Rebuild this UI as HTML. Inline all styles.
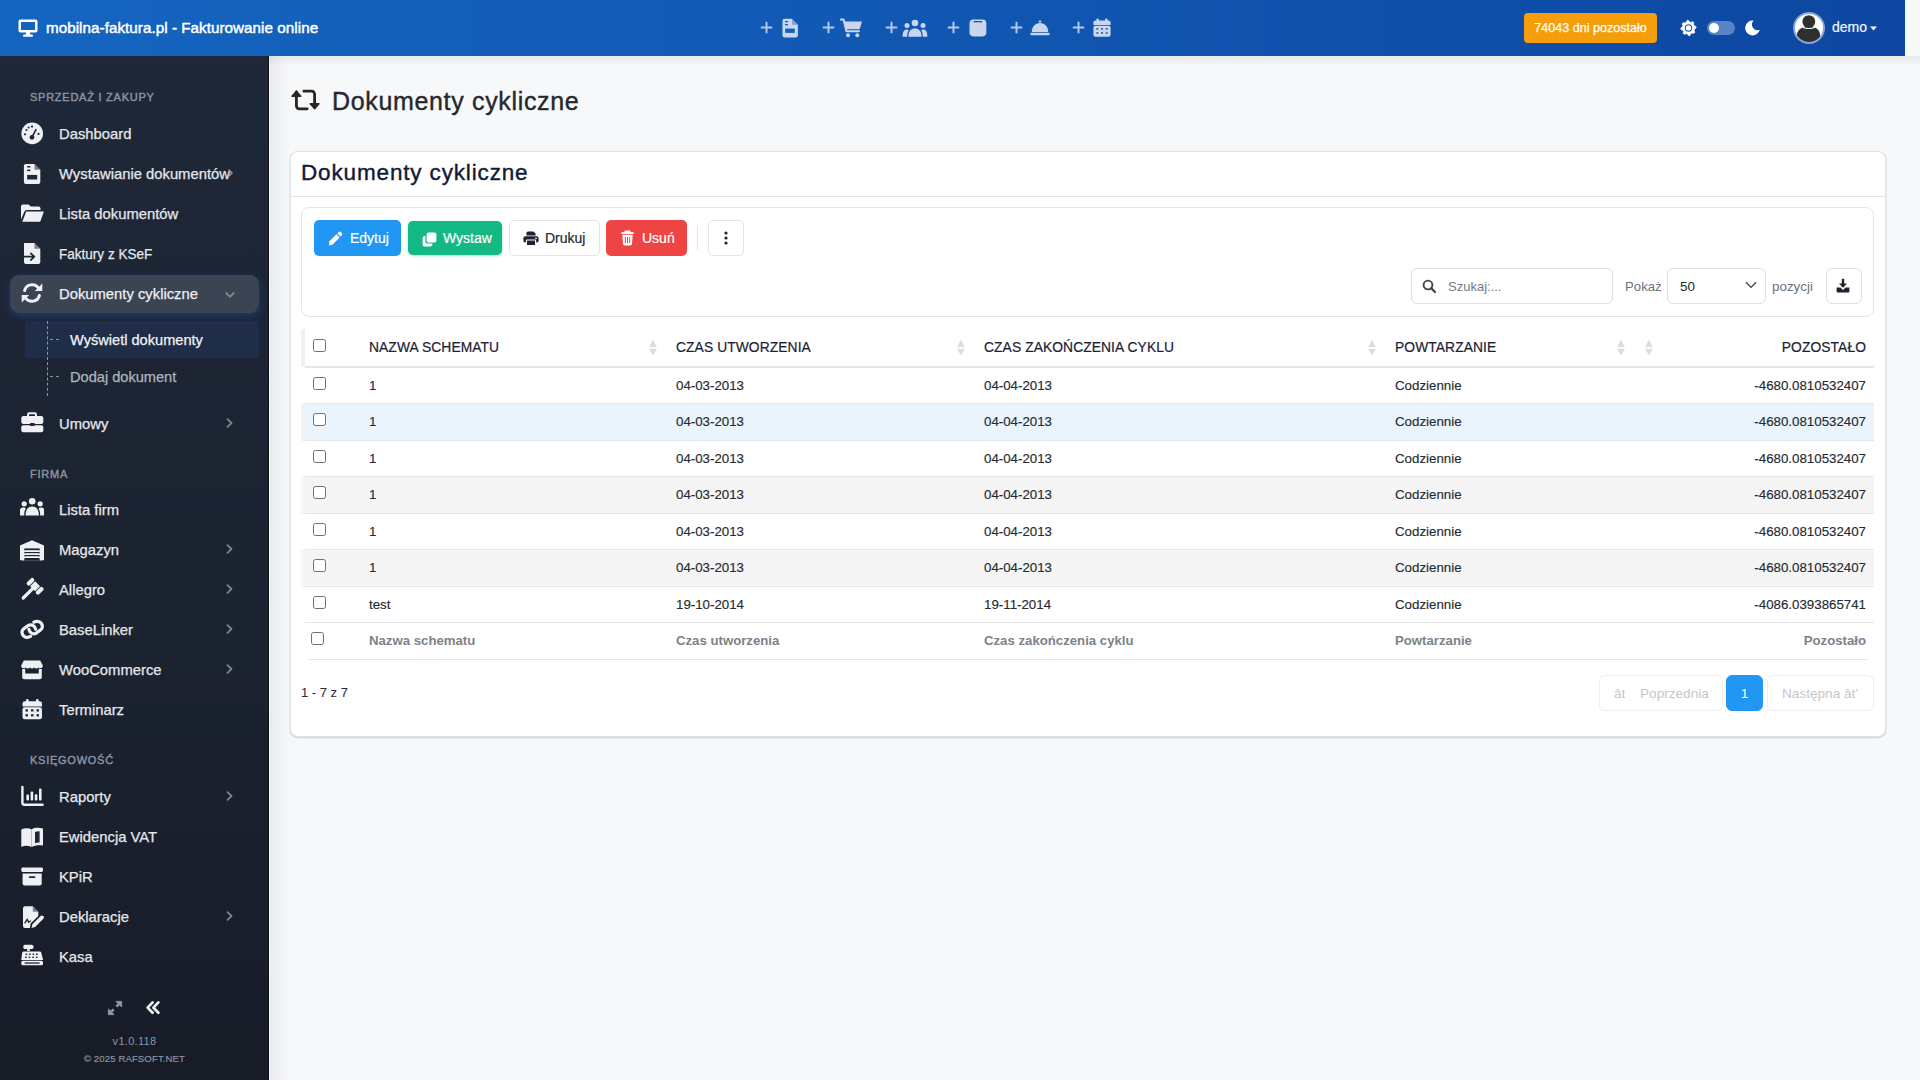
<!DOCTYPE html>
<html lang="pl">
<head>
<meta charset="utf-8">
<title>Dokumenty cykliczne</title>
<style>
*{box-sizing:border-box;margin:0;padding:0}
html,body{width:1920px;height:1080px;overflow:hidden}
body{font-family:"Liberation Sans",sans-serif;background:#f7f8fa;position:relative;color:#212529}
.abs{position:absolute}
svg{display:block}
/* header */
#top{position:absolute;left:0;top:0;width:1905px;height:56px;background:linear-gradient(90deg,#1565c0 0%,#1157b2 50%,#0d47a1 100%);z-index:5}
#top .brand{position:absolute;left:46px;top:18px;font-size:15.2px;line-height:19px;color:#fff;white-space:nowrap;-webkit-text-stroke:0.45px #fff;letter-spacing:0.05px}
.hq{position:absolute;top:17px;height:22px;display:flex;align-items:center;color:#c9d6ee}
.hq .pl{font-size:22px;line-height:22px;margin-right:6px;font-weight:normal}
#badge{position:absolute;left:1524px;top:13px;width:133px;height:30px;border-radius:4px;background:#f59e0b;color:#fff;font-size:12.6px;line-height:30px;text-align:center;white-space:nowrap;-webkit-text-stroke:0.25px #fff}
/* sidebar */
#side{position:absolute;left:0;top:56px;width:269px;height:1024px;background:linear-gradient(180deg,#1f2838 0%,#1b2230 60%,#171c27 100%);border-right:1px solid #0b0f17}
.sec{position:absolute;left:30px;font-size:11px;letter-spacing:0.75px;color:#8e96a3;line-height:14px;white-space:nowrap;margin-top:1.5px;-webkit-text-stroke:0.4px #8e96a3}
.it{position:absolute;left:0;width:269px;height:40px}
.it .ic{position:absolute;left:21px;top:9px;width:23px;height:22px;color:#eef0f3}
.it .tx{position:absolute;left:59px;top:12px;font-size:14.8px;line-height:18px;color:#e6e8eb;white-space:nowrap;-webkit-text-stroke:0.25px #e6e8eb}
.it .ch{position:absolute;left:225px;top:15px;width:9px;height:10px;color:#7d8593}
/* main */
#shadowTop{position:absolute;left:269px;top:56px;width:1651px;height:10px;background:linear-gradient(180deg,rgba(0,0,0,0.06),rgba(0,0,0,0))}
#shadowLeft{position:absolute;left:270px;top:56px;width:22px;height:1024px;background:linear-gradient(90deg,rgba(0,0,0,0.055),rgba(0,0,0,0.02) 50%,rgba(0,0,0,0))}

/* content */
#ptitle{position:absolute;left:332px;top:87px;font-size:25px;line-height:28px;letter-spacing:0.66px;color:#25292d;white-space:nowrap;-webkit-text-stroke:0.4px #25292d}
#card{position:absolute;left:290px;top:151px;width:1596px;height:586px;background:#fff;border:1px solid #dfe2e6;border-radius:8px;box-shadow:0 1px 2px rgba(0,0,0,0.18)}
#ctitle{position:absolute;left:301px;top:159px;font-size:22.5px;line-height:28px;letter-spacing:0.85px;color:#111a35;white-space:nowrap;-webkit-text-stroke:0.4px #111a35}
.hdrline{position:absolute;left:291px;top:196px;width:1594px;height:1px;background:#e3e5e9}
#tool{position:absolute;left:301px;top:207px;width:1573px;height:110px;border:1px solid #e3e5e9;border-radius:8px;background:#fff}
.btn{position:absolute;top:220px;height:36px;border-radius:5px;color:#fff;font-size:14px;line-height:36px;white-space:nowrap}
.btn svg{position:absolute;top:11px}
.btn span{position:absolute;top:0;-webkit-text-stroke:0.2px currentColor}
.inp{position:absolute;top:268px;height:36px;border:1px solid #dcdfe4;border-radius:6px;background:#fff}
.lbl{position:absolute;top:278px;font-size:13.4px;line-height:18px;color:#6b7280;white-space:nowrap}
/* table */
.th{position:absolute;top:339px;font-size:13.8px;line-height:18px;letter-spacing:0.1px;color:#1b2236;white-space:nowrap;-webkit-text-stroke:0.2px currentColor}
.td{position:absolute;font-size:13.3px;line-height:18px;color:#262b33;white-space:nowrap;-webkit-text-stroke:0.15px currentColor}
.tf{position:absolute;top:632px;font-size:13.2px;line-height:18px;font-weight:bold;color:#7d828a;white-space:nowrap}
.rowline{position:absolute;left:305px;width:1569px;height:1px;background:#e4e6ea}
.cb{position:absolute;left:313px;width:13px;height:13px;border:1px solid #6f6f6f;border-radius:2.5px;background:#fff}
.sort{position:absolute;top:339px;width:8px;height:17px}
.pg{position:absolute;top:675px;height:36px;border:1px solid #eceef1;border-radius:6px;font-size:13.6px;line-height:36px;color:#c3c7cd;white-space:nowrap;background:#fff}
</style>
</head>
<body>

<!-- HEADER -->
<div id="top">
  <svg class="abs" style="left:18px;top:19px" width="20" height="18" viewBox="0 0 20 18"><rect x="0.5" y="0.5" width="19" height="13" rx="2" fill="#fff"/><rect x="3" y="3" width="14" height="8" fill="#1462bd"/><rect x="8" y="13" width="4" height="3" fill="#fff"/><rect x="5" y="15.5" width="10" height="2.3" rx="1.1" fill="#fff"/></svg>
  <div class="brand">mobilna-faktura.pl - Fakturowanie online</div>
<svg class="abs" style="left:760px;top:21px" width="13" height="13" viewBox="0 0 13 13"><path d="M6.5 0.8 V12.2 M0.8 6.5 H12.2" stroke="#b4c6e6" stroke-width="2"/></svg><svg class="abs" style="left:782px;top:18px" width="17" height="20" viewBox="0 0 17 20"><path d="M2.5 0.8 H10 L15.9 6.7 V17.5 a2 2 0 0 1 -2 2 H2.5 a2 2 0 0 1 -2 -2 V2.8 a2 2 0 0 1 2 -2z" fill="#c9d6ee"/><path d="M10 0.8 V6.7 H15.9z" fill="#1157b2" opacity="0.4"/><rect x="3" y="3" width="3" height="1.3" fill="#1160b8"/><rect x="3" y="6" width="3" height="1.3" fill="#1160b8"/><rect x="3.2" y="10.6" width="9.6" height="4.3" fill="#1160b8"/></svg><svg class="abs" style="left:822px;top:21px" width="13" height="13" viewBox="0 0 13 13"><path d="M6.5 0.8 V12.2 M0.8 6.5 H12.2" stroke="#b4c6e6" stroke-width="2"/></svg><svg class="abs" style="left:840px;top:18px" width="23" height="20" viewBox="0 0 23 20"><path d="M0.8 1.6 H3.6 L6.4 13.2 H19" stroke="#c9d6ee" stroke-width="2" fill="none" stroke-linecap="round" stroke-linejoin="round"/><path d="M4.5 3.6 H22 L19.6 11.2 H6.3z" fill="#c9d6ee"/><circle cx="8" cy="17.3" r="2" fill="#c9d6ee"/><circle cx="17.3" cy="17.3" r="2" fill="#c9d6ee"/></svg><svg class="abs" style="left:885px;top:21px" width="13" height="13" viewBox="0 0 13 13"><path d="M6.5 0.8 V12.2 M0.8 6.5 H12.2" stroke="#b4c6e6" stroke-width="2"/></svg><svg class="abs" style="left:902px;top:19px" width="26" height="19" viewBox="0 0 26 19"><circle cx="13" cy="4" r="3.3" fill="#c9d6ee"/><circle cx="5" cy="6.5" r="2.5" fill="#c9d6ee"/><circle cx="21" cy="6.5" r="2.5" fill="#c9d6ee"/><path d="M6.4 17.8 C6.4 11.8 9.3 9.4 13 9.4 C16.7 9.4 19.6 11.8 19.6 17.8z" fill="#c9d6ee"/><path d="M0.6 17.8 C0.6 12.6 2.2 10.5 4.6 10.5 C5.6 10.5 6.3 10.8 6.8 11.3 C5.6 12.9 5.2 15.2 5.2 17.8z" fill="#c9d6ee"/><path d="M25.4 17.8 C25.4 12.6 23.8 10.5 21.4 10.5 C20.4 10.5 19.7 10.8 19.2 11.3 C20.4 12.9 20.8 15.2 20.8 17.8z" fill="#c9d6ee"/></svg><svg class="abs" style="left:947px;top:21px" width="13" height="13" viewBox="0 0 13 13"><path d="M6.5 0.8 V12.2 M0.8 6.5 H12.2" stroke="#b4c6e6" stroke-width="2"/></svg><svg class="abs" style="left:969px;top:19px" width="18" height="18" viewBox="0 0 18 18"><rect x="0.5" y="0.6" width="16.8" height="16.8" rx="3.8" fill="#c9d6ee"/><path d="M5.4 3.6 V2.6 H12.4 V3.6" stroke="#1157b2" stroke-width="1.3" fill="none"/></svg><svg class="abs" style="left:1010px;top:21px" width="13" height="13" viewBox="0 0 13 13"><path d="M6.5 0.8 V12.2 M0.8 6.5 H12.2" stroke="#b4c6e6" stroke-width="2"/></svg><svg class="abs" style="left:1030px;top:20px" width="20" height="16" viewBox="0 0 20 16"><rect x="8.6" y="0.4" width="2.8" height="2.2" rx="1" fill="#c9d6ee"/><path d="M1.8 12 C1.8 6.6 5.4 3 10 3 C14.6 3 18.2 6.6 18.2 12z" fill="#c9d6ee"/><rect x="0.3" y="12.8" width="19.4" height="2.4" rx="1.2" fill="#c9d6ee"/></svg><svg class="abs" style="left:1072px;top:21px" width="13" height="13" viewBox="0 0 13 13"><path d="M6.5 0.8 V12.2 M0.8 6.5 H12.2" stroke="#b4c6e6" stroke-width="2"/></svg><svg class="abs" style="left:1093px;top:18px" width="18" height="20" viewBox="0 0 18 20"><rect x="3.5" y="0.4" width="2.4" height="3.6" rx="1.1" fill="#c9d6ee"/><rect x="12.1" y="0.4" width="2.4" height="3.6" rx="1.1" fill="#c9d6ee"/><path d="M0.4 4.6 a2 2 0 0 1 2 -2 H15.6 a2 2 0 0 1 2 2 V7 H0.4z" fill="#c9d6ee"/><rect x="0.4" y="7.8" width="17.2" height="11" rx="2" fill="#c9d6ee"/><g fill="#1157b2"><rect x="3.4" y="10" width="1.8" height="1.6"/><rect x="8.1" y="10" width="1.8" height="1.6"/><rect x="12.8" y="10" width="1.8" height="1.6"/><rect x="3.4" y="14.2" width="1.8" height="1.6"/><rect x="8.1" y="14.2" width="1.8" height="1.6"/><rect x="12.8" y="14.2" width="1.8" height="1.6"/></g></svg><div id="badge">74043 dni pozostało</div><svg class="abs" style="left:1680px;top:20px" width="17" height="16" viewBox="0 0 17 16"><path d="M15.95 6.52 L16.10 8.00 L14.38 9.17 L14.04 10.30 L14.82 12.22 L13.87 13.37 L11.83 12.99 L10.80 13.54 L9.98 15.45 L8.50 15.60 L7.33 13.88 L6.20 13.54 L4.28 14.32 L3.13 13.37 L3.51 11.33 L2.96 10.30 L1.05 9.48 L0.90 8.00 L2.62 6.83 L2.96 5.70 L2.18 3.78 L3.13 2.63 L5.17 3.01 L6.20 2.46 L7.02 0.55 L8.50 0.40 L9.67 2.12 L10.80 2.46 L12.72 1.68 L13.87 2.63 L13.49 4.67 L14.04 5.70 L15.95 6.52 z" fill="#fff" stroke="#fff" stroke-width="0.8" stroke-linejoin="round"/><circle cx="8.5" cy="8" r="3.7" fill="#0f4faa"/><circle cx="8.5" cy="8" r="2.7" fill="#fff"/></svg><div class="abs" style="left:1707px;top:21px;width:28px;height:14px;border-radius:7px;background:#5a84c8"></div><div class="abs" style="left:1709px;top:23px;width:10px;height:10px;border-radius:50%;background:#fff"></div><svg class="abs" style="left:1745px;top:20px" width="16" height="16" viewBox="0 0 16 16"><path d="M8.61 0.67 A7.4 7.4 0 1 0 14.79 9.75 A5.6 5.6 0 0 1 8.61 0.67z" fill="#fff"/></svg><div class="abs" style="left:1793px;top:12px;width:32px;height:32px;border-radius:50%;background:#fff;border:2px solid #8aa6d8;overflow:hidden"><svg width="28" height="28" viewBox="0 0 28 28" style="display:block"><circle cx="13.8" cy="7.6" r="6.4" fill="#2f2f2f"/><path d="M1.8 28 V22 C1.8 16.5 6 13.2 10.5 13.2 H17 C21.6 13.2 25.2 16.5 25.2 22 V28z" fill="#2f2f2f"/><path d="M8 13.6 C10 14.8 17.6 14.8 19.6 13.6" stroke="#fff" stroke-width="1" fill="none"/></svg></div><div class="abs" style="left:1832px;top:18px;font-size:14px;line-height:18px;color:#f3f6fb;white-space:nowrap;-webkit-text-stroke:0.2px #f3f6fb">demo</div><svg class="abs" style="left:1870px;top:26px" width="7" height="5" viewBox="0 0 7 5"><path d="M0 0.5 H7 L3.5 4.5z" fill="#f3f6fb"/></svg>
</div>

<!-- SIDEBAR -->
<div id="side">
<div class="sec" style="top:32px">SPRZEDAŻ I ZAKUPY</div>
<div class="it" style="top:57px"><svg class="ic" style="left:20px;top:8px;width:24px;height:24px" viewBox="0 0 24 24"><circle cx="12.2" cy="12.4" r="10.8" fill="#eef0f3"/><circle cx="6.5" cy="9" r="1.1" fill="#1e2736"/><circle cx="12" cy="5.6" r="1.1" fill="#1e2736"/><circle cx="5" cy="13.3" r="1.1" fill="#1e2736"/><circle cx="18.5" cy="12.9" r="1.1" fill="#1e2736"/><circle cx="8.6" cy="6.6" r="1" fill="#1e2736"/><path d="M12 16.2 L16 8.6" stroke="#1e2736" stroke-width="1.6" stroke-linecap="round"/><circle cx="12" cy="16.3" r="2.4" fill="#1e2736"/></svg><div class="tx">Dashboard</div></div>
<div class="it" style="top:97px"><svg class="ic" style="left:20px;top:8px;width:24px;height:24px" viewBox="0 0 24 24"><path d="M5.9 2.9 H14.5 L20.3 8.7 V20.9 a2 2 0 0 1 -2 2 H5.9 a2 2 0 0 1 -2 -2 V4.9 a2 2 0 0 1 2 -2z" fill="#eef0f3"/><path d="M14.5 2.9 V8.7 H20.3z" fill="#1e2736" opacity="0.55"/><rect x="7.2" y="5" width="3.2" height="1.5" fill="#1e2736"/><rect x="7.2" y="8.6" width="3.2" height="1.5" fill="#1e2736"/><rect x="7.2" y="13.9" width="10" height="4.6" fill="#1e2736"/></svg><div class="tx">Wystawianie dokumentów</div><svg class="ch" style="left:227px;top:16px;width:7px;height:8px;color:#9aa1ac" viewBox="0 0 9 10"><path d="M2.5 1.2 L6.5 5 L2.5 8.8" stroke="currentColor" stroke-width="1.8" fill="none" stroke-linecap="round" stroke-linejoin="round"/></svg></div>
<div class="it" style="top:137px"><svg class="ic" style="left:20px;top:8px;width:24px;height:24px" viewBox="0 0 24 24"><path d="M1 5.6 a2 2 0 0 1 2 -2 H8.6 L10.8 5.6 H18.5 a2 2 0 0 1 2 2 V9 H7 a3 3 0 0 0 -2.8 1.9 L1 18.5z" fill="#eef0f3"/><path d="M6.2 10.4 H23.9 L20.2 20.7 H2.3z" fill="#eef0f3"/></svg><div class="tx">Lista dokumentów</div></div>
<div class="it" style="top:177px"><svg class="ic" style="left:20px;top:8px;width:24px;height:24px" viewBox="0 0 24 24"><path d="M6 2 H14.5 L20.3 7.8 V20.9 a2 2 0 0 1 -2 2 H6 a2 2 0 0 1 -2 -2 V2z" fill="#eef0f3"/><path d="M14.5 2 V7.8 H20.3z" fill="#1e2736" opacity="0.55"/><path d="M2.6 15.7 H14.2 M10.8 12.3 L14.3 15.7 L10.8 19.1" stroke="#1e2736" stroke-width="1.7" fill="none" stroke-linecap="round" stroke-linejoin="round"/></svg><div class="tx" style="transform:scaleX(0.915);transform-origin:0 50%">Faktury z KSeF</div></div>
<div class="abs" style="left:10px;top:219px;width:249px;height:38px;border-radius:9px;background:#3b4452;box-shadow:0 3px 8px rgba(37,99,235,0.33)"></div>
<div class="it" style="top:217px"><svg class="ic" style="left:20px;top:8px;width:24px;height:24px" viewBox="0 0 24 24"><g fill="none" stroke="#eef0f3" stroke-width="3" stroke-linecap="round"><path d="M4.6 9.5 A7.8 7.8 0 0 1 18.2 6.6"/><path d="M19.4 14.5 A7.8 7.8 0 0 1 5.8 17.4"/></g><path d="M22.3 2.5 V10 H14.8z" fill="#eef0f3"/><path d="M1.7 21.5 V14 H9.2z" fill="#eef0f3"/></svg><div class="tx" style="color:#f1f3f5">Dokumenty cykliczne</div></div>
<svg class="abs" style="left:225px;top:234.5px" width="10" height="8" viewBox="0 0 10 8"><path d="M1.2 2 L5 5.8 L8.8 2" stroke="#7d8593" stroke-width="1.8" fill="none" stroke-linecap="round" stroke-linejoin="round"/></svg>
<div class="abs" style="left:25px;top:265px;width:234px;height:37px;background:#1f2d49"></div>
<div class="abs" style="left:47px;top:265px;width:0;height:75px;border-left:1px dashed #8d95a3"></div>
<div class="abs" style="left:50px;top:283px;width:9px;height:0;border-top:1px dashed #8d95a3"></div>
<div class="abs" style="left:50px;top:320px;width:9px;height:0;border-top:1px dashed #8d95a3"></div>
<div class="abs" style="left:70px;top:275px;font-size:14.6px;line-height:18px;color:#f1f3f5;white-space:nowrap;-webkit-text-stroke:0.25px #f1f3f5">Wyświetl dokumenty</div>
<div class="abs" style="left:70px;top:312px;font-size:14.6px;line-height:18px;color:#aeb4bd;white-space:nowrap;-webkit-text-stroke:0.25px #aeb4bd">Dodaj dokument</div>
<div class="it" style="top:347px"><svg class="ic" style="left:20px;top:8px;width:24px;height:24px" viewBox="0 0 24 24"><path d="M8 5 V3.5 a1.3 1.3 0 0 1 1.3 -1.3 h5.4 a1.3 1.3 0 0 1 1.3 1.3 V5" stroke="#eef0f3" stroke-width="2" fill="none"/><rect x="1.3" y="5" width="22" height="8" rx="2" fill="#eef0f3"/><rect x="1.3" y="14.3" width="22" height="7" rx="2" fill="#eef0f3"/><rect x="10" y="12" width="4.6" height="3" rx="0.6" fill="#1e2736"/></svg><div class="tx">Umowy</div><svg class="ch" viewBox="0 0 9 10"><path d="M2.5 1.2 L6.5 5 L2.5 8.8" stroke="currentColor" stroke-width="1.8" fill="none" stroke-linecap="round" stroke-linejoin="round"/></svg></div>
<div class="sec" style="top:409px">FIRMA</div>
<div class="it" style="top:433px"><svg class="ic" style="left:20px;top:8px;width:24px;height:24px" viewBox="0 0 24 24"><circle cx="12.2" cy="4.2" r="3.3" fill="#eef0f3"/><circle cx="4.2" cy="6.8" r="2.6" fill="#eef0f3"/><circle cx="20.2" cy="6.8" r="2.6" fill="#eef0f3"/><path d="M5.5 18.4 C5.5 12 8.5 9.4 12.2 9.4 C15.9 9.4 18.9 12 18.9 18.4z" fill="#eef0f3"/><path d="M-1.4 18.4 C-1.4 12.8 0.5 10.6 3.3 10.6 C4.4 10.6 5.3 11 5.8 11.5 C4.6 13.2 4.2 15.6 4.2 18.4z" fill="#eef0f3"/><path d="M25.8 18.4 C25.8 12.8 23.9 10.6 21.1 10.6 C20 10.6 19.1 11 18.6 11.5 C19.8 13.2 20.2 15.6 20.2 18.4z" fill="#eef0f3"/></svg><div class="tx">Lista firm</div></div>
<div class="it" style="top:473px"><svg class="ic" style="left:20px;top:8px;width:24px;height:24px" viewBox="0 0 24 24"><path d="M0 8.5 L12 3.2 L24 8.5 V23.3 H0z" fill="#eef0f3"/><rect x="4.2" y="11.4" width="15.6" height="2" fill="#1e2736"/><rect x="4.2" y="15" width="15.6" height="1.4" fill="#1e2736"/><rect x="4.2" y="18" width="15.6" height="1.4" fill="#1e2736"/><rect x="4.2" y="21" width="15.6" height="2.3" fill="#1e2736"/><rect x="2.2" y="11.4" width="2" height="12" fill="#eef0f3"/><rect x="19.8" y="11.4" width="2" height="12" fill="#eef0f3"/><rect x="5.4" y="13.4" width="13.2" height="1.6" fill="#eef0f3"/><rect x="5.4" y="16.4" width="13.2" height="1.6" fill="#eef0f3"/><rect x="5.4" y="19.4" width="13.2" height="1.6" fill="#eef0f3"/></svg><div class="tx">Magazyn</div><svg class="ch" viewBox="0 0 9 10"><path d="M2.5 1.2 L6.5 5 L2.5 8.8" stroke="currentColor" stroke-width="1.8" fill="none" stroke-linecap="round" stroke-linejoin="round"/></svg></div>
<div class="it" style="top:513px"><svg class="ic" style="left:20px;top:8px;width:24px;height:24px" viewBox="0 0 24 24"><path d="M3.2 21 L12.4 11.8" stroke="#eef0f3" stroke-width="3.2" stroke-linecap="round"/><rect x="11.6" y="5.8" width="7" height="7" transform="rotate(45 15.1 9.3)" fill="#eef0f3"/><rect x="6" y="2.6" width="9" height="4.2" rx="2" transform="rotate(-45 10.5 4.7)" fill="#eef0f3"/><rect x="15.2" y="11.7" width="9" height="4.2" rx="2" transform="rotate(-45 19.7 13.8)" fill="#eef0f3"/></svg><div class="tx">Allegro</div><svg class="ch" viewBox="0 0 9 10"><path d="M2.5 1.2 L6.5 5 L2.5 8.8" stroke="currentColor" stroke-width="1.8" fill="none" stroke-linecap="round" stroke-linejoin="round"/></svg></div>
<div class="it" style="top:553px"><svg class="ic" style="left:20px;top:8px;width:24px;height:24px" viewBox="0 0 24 24"><g fill="none" stroke="#eef0f3" stroke-width="3.2" stroke-linecap="round" stroke-linejoin="round"><path d="M15.6 12.2 C14.8 8.4 10.9 6.6 7.9 8.7 L3.6 11.9 C0.9 14 1.9 18.7 5.1 19.9 C7 20.6 8.9 20.3 10.5 19.4"/><path d="M8.9 12.4 C9.7 16.2 13.5 18 16.5 15.9 L20.8 12.7 C23.5 10.6 22.5 5.9 19.3 4.7 C17.4 4 15.5 4.3 13.9 5.2"/></g></svg><div class="tx">BaseLinker</div><svg class="ch" viewBox="0 0 9 10"><path d="M2.5 1.2 L6.5 5 L2.5 8.8" stroke="currentColor" stroke-width="1.8" fill="none" stroke-linecap="round" stroke-linejoin="round"/></svg></div>
<div class="it" style="top:593px"><svg class="ic" style="left:20px;top:8px;width:24px;height:24px" viewBox="0 0 24 24"><path d="M3.8 3.4 H20.2 L22.9 8.8 a2.6 2.6 0 0 1 -4.5 1.6 a2.6 2.6 0 0 1 -4.2 0 a2.6 2.6 0 0 1 -4.3 0 a2.6 2.6 0 0 1 -4.2 0 a2.6 2.6 0 0 1 -4.6 -1.6z" fill="#eef0f3"/><path d="M2.2 12 V20.3 a2 2 0 0 0 2 2 H19.8 a2 2 0 0 0 2 -2 V12 H18.8 V16.4 H5.2 V12z" fill="#eef0f3"/></svg><div class="tx">WooCommerce</div><svg class="ch" viewBox="0 0 9 10"><path d="M2.5 1.2 L6.5 5 L2.5 8.8" stroke="currentColor" stroke-width="1.8" fill="none" stroke-linecap="round" stroke-linejoin="round"/></svg></div>
<div class="it" style="top:633px"><svg class="ic" style="left:20px;top:8px;width:24px;height:24px" viewBox="0 0 24 24"><rect x="6" y="2" width="2.6" height="4" rx="1.2" fill="#eef0f3"/><rect x="16" y="2" width="2.6" height="4" rx="1.2" fill="#eef0f3"/><path d="M2.5 6.5 a2.3 2.3 0 0 1 2.3 -2.3 H19.7 a2.3 2.3 0 0 1 2.3 2.3 V9.5 H2.5z" fill="#eef0f3"/><rect x="2.5" y="10.3" width="19.5" height="11.9" rx="2.2" fill="#eef0f3"/><g fill="#1e2736"><rect x="5.5" y="12.3" width="2.5" height="2.2"/><rect x="11" y="12.3" width="2.5" height="2.2"/><rect x="16.5" y="12.3" width="2.5" height="2.2"/><rect x="5.5" y="17.2" width="2.5" height="2.2"/><rect x="11" y="17.2" width="2.5" height="2.2"/><rect x="16.5" y="17.2" width="2.5" height="2.2"/></g></svg><div class="tx">Terminarz</div></div>
<div class="sec" style="top:695px">KSIĘGOWOŚĆ</div>
<div class="it" style="top:720px"><svg class="ic" style="left:20px;top:8px;width:24px;height:24px" viewBox="0 0 24 24"><path d="M2.4 3 V18.8 a2 2 0 0 0 2 2 H22.6" stroke="#eef0f3" stroke-width="2.4" fill="none" stroke-linecap="round"/><rect x="6.4" y="10.5" width="2.6" height="6" rx="1" fill="#eef0f3"/><rect x="10.6" y="7.4" width="2.6" height="9.1" rx="1" fill="#eef0f3"/><rect x="14.8" y="10.2" width="2.6" height="6.3" rx="1" fill="#eef0f3"/><rect x="19" y="4.6" width="2.6" height="11.9" rx="1" fill="#eef0f3"/></svg><div class="tx">Raporty</div><svg class="ch" viewBox="0 0 9 10"><path d="M2.5 1.2 L6.5 5 L2.5 8.8" stroke="currentColor" stroke-width="1.8" fill="none" stroke-linecap="round" stroke-linejoin="round"/></svg></div>
<div class="it" style="top:760px"><svg class="ic" style="left:20px;top:8px;width:24px;height:24px" viewBox="0 0 24 24"><path d="M1.3 5.6 C4.5 3.8 8.2 3.8 11.6 5.2 V23 C8.2 21.3 4.5 21.3 1.3 22.9z" fill="#eef0f3"/><path d="M11.6 5.2 C14.8 3.6 19.2 3.4 23 4.6 V21.6 C19.2 20.8 15 21.2 11.6 23z" fill="#eef0f3"/><path d="M15 8 C16.8 7.3 18.3 7.1 19.6 7.3 V18.5 C18.2 18.3 16.6 18.6 15 19.2z" fill="#1e2736"/></svg><div class="tx">Ewidencja VAT</div></div>
<div class="it" style="top:800px"><svg class="ic" style="left:20px;top:8px;width:24px;height:24px" viewBox="0 0 24 24"><rect x="1.3" y="3.6" width="21.7" height="4.4" rx="1.4" fill="#eef0f3"/><path d="M2.6 9.6 H21.7 V19.5 a2 2 0 0 1 -2 2 H4.6 a2 2 0 0 1 -2 -2z" fill="#eef0f3"/><rect x="8.8" y="12.2" width="6.6" height="1.8" rx="0.9" fill="#1e2736"/></svg><div class="tx">KPiR</div></div>
<div class="it" style="top:840px"><svg class="ic" style="left:20px;top:8px;width:24px;height:24px" viewBox="0 0 24 24"><path d="M5 2.3 H12.8 L18.3 7.8 V12 L10.6 19.6 L10 24 H5 a2 2 0 0 1 -2 -2 V4.3 a2 2 0 0 1 2 -2z" fill="#eef0f3"/><path d="M12.8 2.3 V7.8 H18.3z" fill="#1e2736" opacity="0.55"/><path d="M4.6 19.3 L7.2 15.4 L8.6 18.2 L10.8 16.8" stroke="#1e2736" stroke-width="1.3" fill="none"/><path d="M12.4 20.3 L20.6 12.1 a1.9 1.9 0 0 1 2.7 2.7 L15.1 23 L11.5 23.9z" fill="#eef0f3"/></svg><div class="tx">Deklaracje</div><svg class="ch" viewBox="0 0 9 10"><path d="M2.5 1.2 L6.5 5 L2.5 8.8" stroke="currentColor" stroke-width="1.8" fill="none" stroke-linecap="round" stroke-linejoin="round"/></svg></div>
<div class="it" style="top:880px"><svg class="ic" style="left:20px;top:8px;width:24px;height:24px" viewBox="0 0 24 24"><rect x="3.4" y="0.7" width="10" height="4.4" rx="1.5" fill="#eef0f3"/><rect x="7.2" y="5" width="2.6" height="2" fill="#eef0f3"/><path d="M3.6 7.4 H19.8 a1.5 1.5 0 0 1 1.4 1 L23 15.5 V16 H1.3 V15.5 L2.2 8.4 a1.5 1.5 0 0 1 1.4 -1z" fill="#eef0f3"/><rect x="1.3" y="16.8" width="21.7" height="4.4" rx="1.5" fill="#eef0f3"/><g fill="#1e2736"><rect x="5.5" y="9.6" width="1.8" height="1.3"/><rect x="9" y="9.6" width="1.8" height="1.3"/><rect x="12.5" y="9.6" width="1.8" height="1.3"/><rect x="16" y="9.6" width="1.8" height="1.3"/><rect x="5" y="12.6" width="1.8" height="1.3"/><rect x="8.6" y="12.6" width="1.8" height="1.3"/><rect x="12.2" y="12.6" width="1.8" height="1.3"/><rect x="15.8" y="12.6" width="1.8" height="1.3"/><rect x="4.6" y="18.4" width="15" height="1.3"/></g></svg><div class="tx">Kasa</div></div>
<svg class="abs" style="left:107px;top:944px" width="16" height="16" viewBox="0 0 16 16"><path d="M9 1.4 H14.6 V7z M7 14.6 H1.4 V9z" fill="#8a96a8" stroke="#8a96a8" stroke-width="1" stroke-linejoin="round"/><path d="M13 3 L9.4 6.6 M3 13 L6.6 9.4" stroke="#8a96a8" stroke-width="2.6"/></svg>
<svg class="abs" style="left:145px;top:944px" width="16" height="16" viewBox="0 0 16 16"><path d="M7.6 2.4 L2.6 7.6 L7.6 12.8 M13.4 2.4 L8.4 7.6 L13.4 12.8" stroke="#f3f4f6" stroke-width="2.7" fill="none" stroke-linecap="round" stroke-linejoin="round"/></svg>
<div class="abs" style="left:0;top:978px;width:269px;text-align:center;font-size:11px;line-height:14px;color:#8d97a5;letter-spacing:0.3px">v1.0.118</div>
<div class="abs" style="left:0;top:997px;width:269px;text-align:center;font-size:9.6px;line-height:12px;color:#8d97a5;letter-spacing:0.1px;-webkit-text-stroke:0.15px #8d97a5">© 2025 RAFSOFT.NET</div>
</div>

<!-- MAIN -->
<div id="shadowTop"></div>
<div id="shadowLeft"></div>
<svg class="abs" style="left:291px;top:88px" width="29" height="24" viewBox="0 0 29 24"><path d="M5.4 4 V17.8 a3 3 0 0 0 3 3 H16.2" stroke="#262626" stroke-width="2.8" fill="none" stroke-linecap="round"/><path d="M1 8.2 L5.4 3.2 L9.8 8.2z" fill="#262626" stroke="#262626" stroke-width="1.4" stroke-linejoin="round"/><path d="M12.8 3.2 H20.6 a3 3 0 0 1 3 3 V19" stroke="#262626" stroke-width="2.8" fill="none" stroke-linecap="round"/><path d="M19.2 15.8 L23.6 20.8 L28 15.8z" fill="#262626" stroke="#262626" stroke-width="1.4" stroke-linejoin="round"/></svg><div id="ptitle">Dokumenty cykliczne</div><div id="card"></div><div id="ctitle">Dokumenty cykliczne</div><div class="hdrline"></div><div id="tool"></div><div class="btn" style="left:314px;width:87px;background:#2196f3"><svg style="left:14px;top:11px" width="15" height="15" viewBox="0 0 15 15"><path d="M10.6 1.2 a1.6 1.6 0 0 1 2.3 0 L13.8 2.1 a1.6 1.6 0 0 1 0 2.3 L12.6 5.6 L9.4 2.4z" fill="#fff"/><path d="M8.5 3.3 L11.7 6.5 L4.6 13.6 L0.8 14.4 L1.5 10.3z" fill="#fff"/></svg><span style="left:36px">Edytuj</span></div><div class="btn" style="left:408px;top:221px;height:34px;line-height:34px;width:94px;background:#14b884;box-shadow:0 1px 3px rgba(20,184,132,0.4)"><svg style="left:14px;top:11px" width="15" height="15" viewBox="0 0 15 15"><rect x="4.6" y="0.6" width="9.8" height="10" rx="2" fill="#fff"/><path d="M3.4 4 H2.6 a2 2 0 0 0 -2 2 V12.4 a2 2 0 0 0 2 2 H8.4 a2 2 0 0 0 2 -2 V11.6 H5.6 a2.2 2.2 0 0 1 -2.2 -2.2z" fill="#fff"/></svg><span style="left:35px">Wystaw</span></div><div class="btn" style="left:509px;width:91px;background:#fff;border:1px solid #e1e4e8;color:#232a36;line-height:34px"><svg style="left:13px;top:10px" width="16" height="15" viewBox="0 0 16 15"><path d="M3.4 4.4 V2.2 a1.6 1.6 0 0 1 1.6 -1.6 H10.4 L12.6 2.6 V4.4z" fill="#1d2330"/><rect x="0.4" y="5.2" width="15.2" height="6.2" rx="2" fill="#1d2330"/><rect x="3.4" y="9" width="9.2" height="5.6" rx="0.8" fill="#1d2330" stroke="#fff" stroke-width="1.2"/><circle cx="13" cy="7.4" r="0.8" fill="#fff"/></svg><span style="left:35px">Drukuj</span></div><div class="btn" style="left:606px;width:81px;background:#ef4444"><svg style="left:15px;top:10px" width="13" height="16" viewBox="0 0 13 16"><path d="M4 0.6 H9 L9.8 2 H12.6 V4 H0.4 V2 H3.2z" fill="#fff"/><path d="M1.3 4.8 H11.7 L11 14 a1.6 1.6 0 0 1 -1.6 1.4 H3.6 a1.6 1.6 0 0 1 -1.6 -1.4z" fill="#fff"/><path d="M4.3 7 V13.2 M6.5 7 V13.2 M8.7 7 V13.2" stroke="#ef4444" stroke-width="1"/></svg><span style="left:36px">Usuń</span></div><div class="abs" style="left:697px;top:226px;width:1px;height:24px;background:#e3e5e9"></div><div class="btn" style="left:708px;width:36px;background:#fff;border:1px solid #e1e4e8"><svg style="left:15px;top:10px" width="4" height="14" viewBox="0 0 4 14"><circle cx="2" cy="2" r="1.6" fill="#1d2330"/><circle cx="2" cy="7" r="1.6" fill="#1d2330"/><circle cx="2" cy="12" r="1.6" fill="#1d2330"/></svg></div><div class="inp" style="left:1411px;width:202px"></div><svg class="abs" style="left:1422px;top:279px" width="15" height="15" viewBox="0 0 15 15"><circle cx="6" cy="6" r="4.4" stroke="#3f4652" stroke-width="1.9" fill="none"/><path d="M9.4 9.4 L13 13" stroke="#3f4652" stroke-width="2.2" stroke-linecap="round"/></svg><div class="lbl" style="left:1448px;font-size:13px;color:#737a85">Szukaj:...</div><div class="lbl" style="left:1625px;font-size:13.2px">Pokaż</div><div class="inp" style="left:1667px;width:99px"></div><div class="lbl" style="left:1680px;color:#1f2530">50</div><svg class="abs" style="left:1745px;top:281px" width="12" height="8" viewBox="0 0 12 8"><path d="M1 1.2 L6 6.4 L11 1.2" stroke="#3a404c" stroke-width="1.3" fill="none"/></svg><div class="lbl" style="left:1772px;font-size:13.4px">pozycji</div><div class="inp" style="left:1826px;width:36px"></div><svg class="abs" style="left:1836px;top:278px" width="14" height="15" viewBox="0 0 14 15"><path d="M7 0.8 V9" stroke="#1d2330" stroke-width="2.4"/><path d="M3 5.6 L7 9.8 L11 5.6z" fill="#1d2330"/><path d="M0.6 9.6 H4.4 L7 12 L9.6 9.6 H13.4 V13.4 a1 1 0 0 1 -1 1 H1.6 a1 1 0 0 1 -1 -1z" fill="#1d2330"/></svg><div class="abs" style="left:301px;top:329px;width:4px;height:38px;background:#eff0f2;border-top-left-radius:6px"></div><div class="abs" style="left:305px;top:366px;width:1569px;height:2px;background:#e2e4e9"></div><div class="cb" style="top:339px"></div><div class="th" style="left:369px">NAZWA SCHEMATU</div><div class="th" style="left:676px">CZAS UTWORZENIA</div><div class="th" style="left:984px">CZAS ZAKOŃCZENIA CYKLU</div><div class="th" style="left:1395px">POWTARZANIE</div><div class="th" style="left:1700px;width:166px;text-align:right">POZOSTAŁO</div><div class="sort" style="left:649px"><svg width="8" height="17" viewBox="0 0 8 17"><path d="M4 0.5 L7.9 8 H0.1z" fill="#dcdde1"/><path d="M4 16.5 L7.9 9.8 H0.1z" fill="#dcdde1"/></svg></div><div class="sort" style="left:957px"><svg width="8" height="17" viewBox="0 0 8 17"><path d="M4 0.5 L7.9 8 H0.1z" fill="#dcdde1"/><path d="M4 16.5 L7.9 9.8 H0.1z" fill="#dcdde1"/></svg></div><div class="sort" style="left:1368px"><svg width="8" height="17" viewBox="0 0 8 17"><path d="M4 0.5 L7.9 8 H0.1z" fill="#dcdde1"/><path d="M4 16.5 L7.9 9.8 H0.1z" fill="#dcdde1"/></svg></div><div class="sort" style="left:1617px"><svg width="8" height="17" viewBox="0 0 8 17"><path d="M4 0.5 L7.9 8 H0.1z" fill="#dcdde1"/><path d="M4 16.5 L7.9 9.8 H0.1z" fill="#dcdde1"/></svg></div><div class="sort" style="left:1645px"><svg width="8" height="17" viewBox="0 0 8 17"><path d="M4 0.5 L7.9 8 H0.1z" fill="#dcdde1"/><path d="M4 16.5 L7.9 9.8 H0.1z" fill="#dcdde1"/></svg></div><div class="rowline" style="top:403px"></div><div class="cb" style="top:377px"></div><div class="td" style="left:369px;top:377px;color:#262b33">1</div><div class="td" style="left:676px;top:377px">04-03-2013</div><div class="td" style="left:984px;top:377px">04-04-2013</div><div class="td" style="left:1395px;top:377px">Codziennie</div><div class="td" style="left:1666px;top:377px;width:200px;text-align:right">-4680.0810532407</div><div class="abs" style="left:305px;top:404px;width:1569px;height:37px;background:#eaf4fd"></div><div class="abs" style="left:301px;top:404px;width:4px;height:37px;background:#f1f2f4"></div><div class="rowline" style="top:440px"></div><div class="cb" style="top:413px"></div><div class="td" style="left:369px;top:413px;color:#262b33">1</div><div class="td" style="left:676px;top:413px">04-03-2013</div><div class="td" style="left:984px;top:413px">04-04-2013</div><div class="td" style="left:1395px;top:413px">Codziennie</div><div class="td" style="left:1666px;top:413px;width:200px;text-align:right">-4680.0810532407</div><div class="rowline" style="top:476px"></div><div class="cb" style="top:450px"></div><div class="td" style="left:369px;top:450px;color:#262b33">1</div><div class="td" style="left:676px;top:450px">04-03-2013</div><div class="td" style="left:984px;top:450px">04-04-2013</div><div class="td" style="left:1395px;top:450px">Codziennie</div><div class="td" style="left:1666px;top:450px;width:200px;text-align:right">-4680.0810532407</div><div class="abs" style="left:301px;top:477px;width:1573px;height:37px;background:#f5f5f5"></div><div class="rowline" style="top:513px"></div><div class="cb" style="top:486px"></div><div class="td" style="left:369px;top:486px;color:#262b33">1</div><div class="td" style="left:676px;top:486px">04-03-2013</div><div class="td" style="left:984px;top:486px">04-04-2013</div><div class="td" style="left:1395px;top:486px">Codziennie</div><div class="td" style="left:1666px;top:486px;width:200px;text-align:right">-4680.0810532407</div><div class="rowline" style="top:549px"></div><div class="cb" style="top:523px"></div><div class="td" style="left:369px;top:523px;color:#262b33">1</div><div class="td" style="left:676px;top:523px">04-03-2013</div><div class="td" style="left:984px;top:523px">04-04-2013</div><div class="td" style="left:1395px;top:523px">Codziennie</div><div class="td" style="left:1666px;top:523px;width:200px;text-align:right">-4680.0810532407</div><div class="abs" style="left:301px;top:550px;width:1573px;height:37px;background:#f5f5f5"></div><div class="rowline" style="top:586px"></div><div class="cb" style="top:559px"></div><div class="td" style="left:369px;top:559px;color:#262b33">1</div><div class="td" style="left:676px;top:559px">04-03-2013</div><div class="td" style="left:984px;top:559px">04-04-2013</div><div class="td" style="left:1395px;top:559px">Codziennie</div><div class="td" style="left:1666px;top:559px;width:200px;text-align:right">-4680.0810532407</div><div class="rowline" style="top:622px"></div><div class="cb" style="top:596px"></div><div class="td" style="left:369px;top:596px;color:#262b33">test</div><div class="td" style="left:676px;top:596px">19-10-2014</div><div class="td" style="left:984px;top:596px">19-11-2014</div><div class="td" style="left:1395px;top:596px">Codziennie</div><div class="td" style="left:1666px;top:596px;width:200px;text-align:right">-4086.0393865741</div><div class="cb" style="top:632px;left:311px"></div><div class="tf" style="left:369px">Nazwa schematu</div><div class="tf" style="left:676px">Czas utworzenia</div><div class="tf" style="left:984px">Czas zakończenia cyklu</div><div class="tf" style="left:1395px">Powtarzanie</div><div class="tf" style="left:1700px;width:166px;text-align:right">Pozostało</div><div class="abs" style="left:308px;top:659px;width:1559px;height:1px;background:#e4e6ea"></div><div class="abs" style="left:301px;top:684px;font-size:13px;line-height:18px;color:#262b33;white-space:nowrap">1 - 7 z 7</div><div class="pg" style="left:1599px;width:124px"><span style="position:absolute;left:14px">ât</span><span style="position:absolute;left:40px">Poprzednia</span></div><div class="pg" style="left:1726px;width:37px;background:#2196f3;border-color:#2196f3;color:#fff;text-align:center">1</div><div class="pg" style="left:1767px;width:107px"><span style="position:absolute;left:14px">Następna ât’</span></div>


</body>
</html>
